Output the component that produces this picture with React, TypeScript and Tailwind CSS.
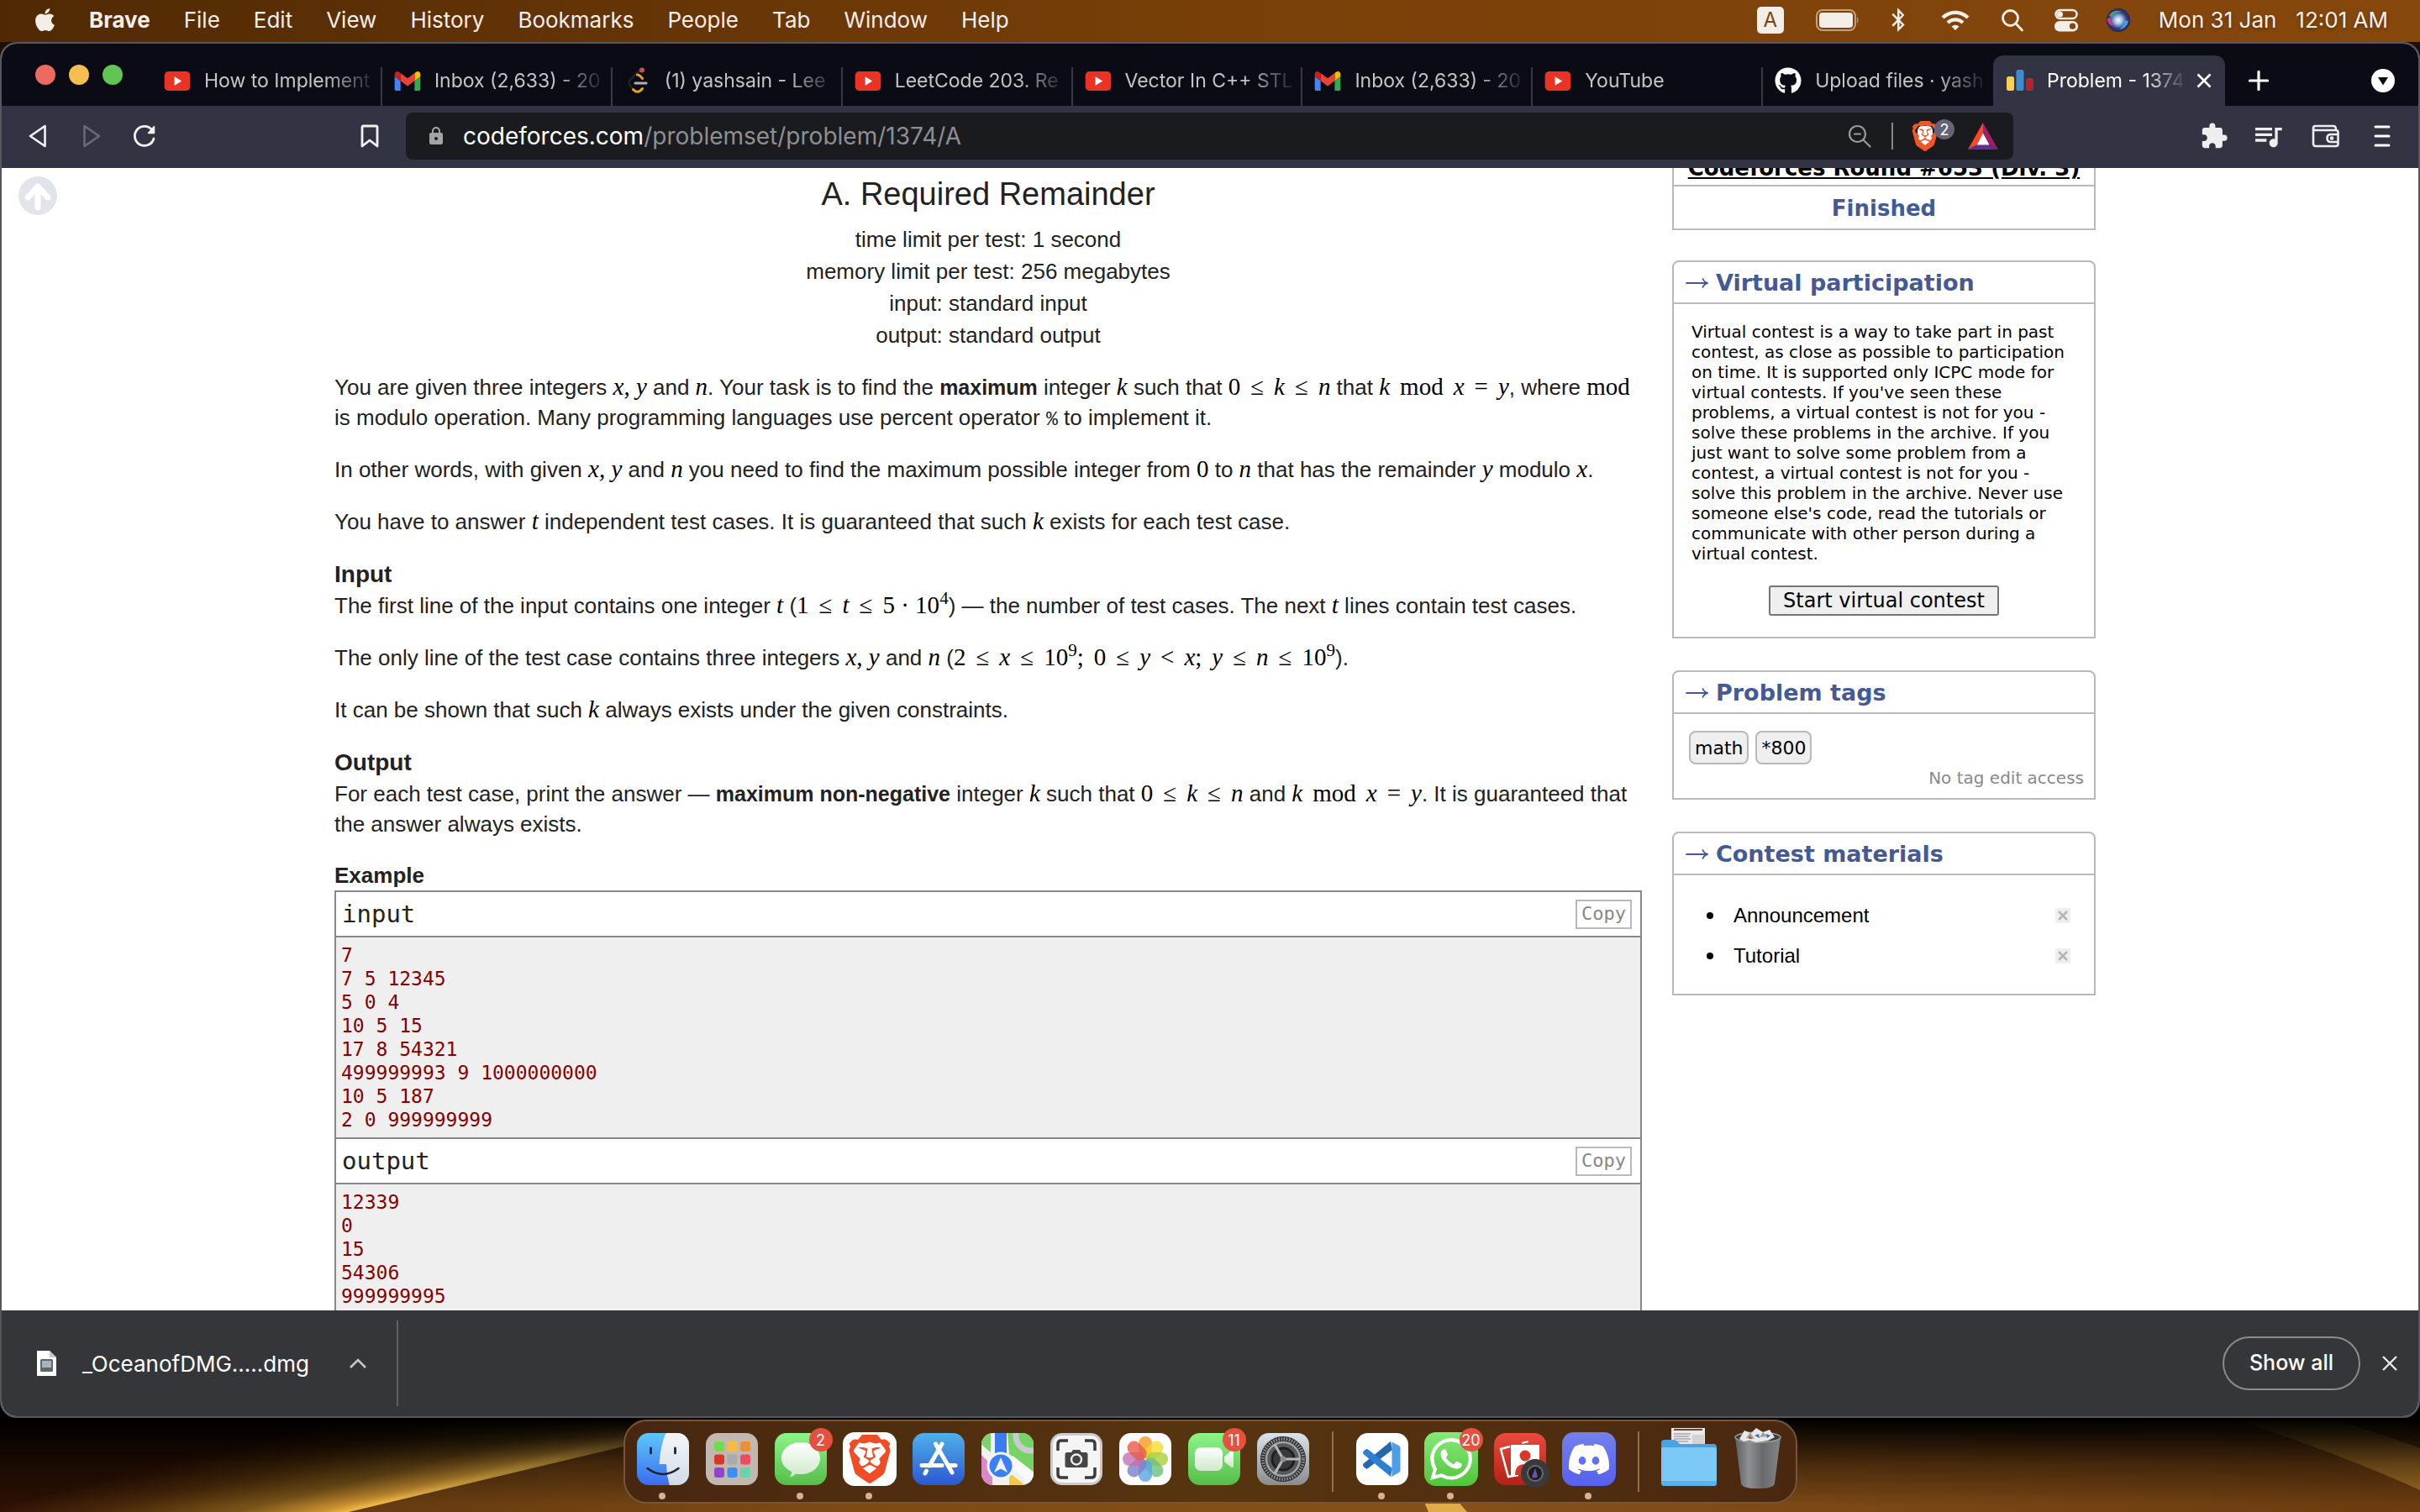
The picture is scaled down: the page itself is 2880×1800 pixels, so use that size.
import type { ReactNode } from 'react';
import { FaApple, FaGithub, FaBluetoothB } from 'react-icons/fa';
import { SiBrave, SiDiscord, SiWhatsapp } from 'react-icons/si';
import { MdWifi, MdLock, MdExtension, MdQueueMusic } from 'react-icons/md';

/* ---------- small icons ---------- */

function YoutubeIcon() {
  return (
    <svg viewBox="0 0 32 24" className="h-[23px] w-8">
      <rect width="32" height="24" rx="5" fill="#ea3323" />
      <path d="M12.500 6.500 21.500 12l-9 5.500z" fill="#fff" />
    </svg>
  );
}

function GmailIcon() {
  return (
    <svg viewBox="52 42 88 66" className="h-[23px] w-8">
      <path fill="#4285f4" d="M58 108h14V74L52 59v43c0 3.320 2.690 6 6 6" />
      <path fill="#34a853" d="M120 108h14c3.320 0 6-2.690 6-6V59l-20 15" />
      <path fill="#fbbc04" d="M120 48v26l20-15v-8c0-7.420-8.470-11.650-14.400-7.200" />
      <path fill="#ea4335" d="M72 74V48l24 18 24-18v26L96 92" />
      <path fill="#c5221f" d="M52 51v8l20 15V48l-5.600-4.200c-5.940-4.450-14.400-.22-14.400 7.200" />
    </svg>
  );
}

function LeetcodeIcon() {
  return (
    <svg viewBox="0 0 32 32" className="size-8" fill="none" strokeWidth="3" strokeLinecap="round">
      <path d="M20 2 7.500 14.500q-4 4 0 8l4 5.500" stroke="#26221f" strokeWidth="2.500" />
      <path d="M15.500 9q3 0 6 4.500" stroke="#e7a41f" />
      <path d="M10.500 26.500q5.500 6 11-1" stroke="#e7a41f" />
      <path d="M13 19h13" stroke="#b3b1b0" />
      <circle cx="21" cy="3.500" r="3" fill="#c9504a" />
    </svg>
  );
}

function CodeforcesIcon() {
  return (
    <svg viewBox="0 0 32 26" className="h-[26px] w-8 shrink-0">
      <rect x="0" y="8" width="9" height="17" rx="2.500" fill="#f6d155" />
      <rect x="11.500" y="0" width="9" height="25" rx="2.500" fill="#3b8dd0" />
      <rect x="23" y="10" width="9" height="15" rx="2.500" fill="#b3252c" />
    </svg>
  );
}

/* ---------- menu bar ---------- */

const menus = ['File', 'Edit', 'View', 'History', 'Bookmarks', 'People', 'Tab', 'Window', 'Help'];

function MenuBar() {
  return (
    <header className="flex h-[50px] shrink-0 items-center justify-between bg-linear-to-r from-[#502904] via-[#783f08] to-[#87480d] pr-[38px] pb-[3px] pl-[38px] text-[26px] text-[#f4eee8] [text-shadow:0_2px_4px_rgba(0,0,0,0.35)]">
      <nav className="flex items-center gap-[40px]">
        <button aria-label="Apple menu" className="-mr-[3px]"><FaApple className="size-[31px]" /></button>
        <button className="font-bold">Brave</button>
        {menus.map((m) => (
          <button key={m}>{m}</button>
        ))}
      </nav>
      <div className="flex items-center">
        <button className="flex size-8 items-center justify-center rounded-[5px] bg-[#f4eee8] text-[24px] text-[#7d410b] [text-shadow:none]">A</button>
        <svg viewBox="0 0 52 26" className="ml-[38px] h-[26px] w-[52px]">
          <rect x="1" y="1" width="46" height="24" rx="7" fill="none" stroke="#f4eee8" strokeOpacity="0.55" strokeWidth="2" />
          <rect x="4" y="4" width="40" height="18" rx="4" fill="#f4eee8" />
          <path d="M49 9q3 4 0 8z" fill="#f4eee8" fillOpacity="0.55" />
        </svg>
        <FaBluetoothB className="ml-[34px] h-[29px] w-6" />
        <MdWifi className="ml-[38px] size-9" />
        <svg viewBox="0 0 28 28" className="ml-[36px] size-7" fill="none" stroke="#f4eee8" strokeWidth="2.800" strokeLinecap="round">
          <circle cx="11.500" cy="11.500" r="9" />
          <path d="m18.500 18.500 7 7.500" />
        </svg>
        <svg viewBox="0 0 28 28" className="ml-[36px] size-7">
          <rect x="1.500" y="2" width="25" height="10" rx="5" fill="none" stroke="#f4eee8" strokeWidth="2.400" />
          <circle cx="6.500" cy="7" r="3.500" fill="#f4eee8" />
          <rect x="0" y="15" width="28" height="12.500" rx="6" fill="#f4eee8" />
          <circle cx="21.500" cy="21.200" r="3.600" fill="#83450c" />
        </svg>
        <svg viewBox="0 0 28 28" className="ml-[34px] size-7">
          <defs>
            <radialGradient id="siri">
              <stop offset="0" stopColor="#fff" />
              <stop offset="0.350" stopColor="#9db8ee" />
              <stop offset="0.700" stopColor="#35407e" />
              <stop offset="1" stopColor="#2a2350" />
            </radialGradient>
          </defs>
          <circle cx="14" cy="14" r="14" fill="url(#siri)" />
          <path d="M3 8q6-8 15-4-9 0-11 8z" fill="#3f9c84" />
          <path d="M1 12q0 8 8 9-5-4-4-10z" fill="#d63d8f" />
          <path d="M26 15q-2 9-11 10 6-4 7-11z" fill="#3fa4ea" />
        </svg>
        <time className="ml-[34px] flex gap-[23px]"><span>Mon 31 Jan</span><span>12:01 AM</span></time>
      </div>
    </header>
  );
}

/* ---------- tabs ---------- */

const tabs: { icon: ReactNode; title: string }[] = [
  { icon: <YoutubeIcon />, title: 'How to Implement' },
  { icon: <GmailIcon />, title: 'Inbox (2,633) - 20' },
  { icon: <LeetcodeIcon />, title: '(1) yashsain - Lee' },
  { icon: <YoutubeIcon />, title: 'LeetCode 203. Re' },
  { icon: <YoutubeIcon />, title: 'Vector In C++ STL' },
  { icon: <GmailIcon />, title: 'Inbox (2,633) - 20' },
  { icon: <YoutubeIcon />, title: 'YouTube' },
  { icon: <FaGithub className="size-8 text-white" />, title: 'Upload files · yash' },
];

function TabStrip() {
  return (
    <div className="flex h-[74px] shrink-0 items-end bg-[#0b0b15]">
      <div className="flex h-full w-[179px] shrink-0 items-center gap-4 pl-10">
        <button aria-label="Close window" className="size-6 rounded-full bg-[#ee6a5f]" />
        <button aria-label="Minimise window" className="size-6 rounded-full bg-[#f5bf4f]" />
        <button aria-label="Zoom window" className="size-6 rounded-full bg-[#61c554]" />
      </div>
      {tabs.map((t, i) => (
        <div key={i} className="relative flex h-[60px] max-w-[274px] min-w-0 flex-1 items-center">
          <button className="flex w-full min-w-0 items-center gap-4 pr-[5px] pl-[14px] text-[23px] text-[#c4c4c7]">
            <span className="shrink-0">{t.icon}</span>
            <span className="min-w-0 flex-1 overflow-hidden text-left whitespace-nowrap [mask-image:linear-gradient(to_right,black_70%,transparent)]">{t.title}</span>
          </button>
          {i < 7 && <span className="absolute right-0 bottom-0 h-[46px] w-[2px] bg-[#38383f]" />}
        </div>
      ))}
      <div className="flex h-[60px] max-w-[276px] min-w-0 flex-1 items-center rounded-t-[12px] bg-[#323443] pl-[16px] text-[23px] text-white">
        <CodeforcesIcon />
        <button className="ml-4 w-[166px] overflow-hidden text-left whitespace-nowrap [mask-image:linear-gradient(to_right,black_70%,transparent)]">Problem - 1374</button>
        <button aria-label="Close tab" className="ml-[12px]">
          <svg viewBox="0 0 18 18" className="size-[18px]" stroke="#fff" strokeWidth="2.600"><path d="m1.500 1.500 15 15m0-15-15 15" /></svg>
        </button>
      </div>
      <div className="ml-auto flex h-[60px] w-[230px] shrink-0 items-center justify-between pr-[28px] pl-[28px]">
        <button aria-label="New tab">
          <svg viewBox="0 0 24 24" className="size-6" stroke="#fff" strokeWidth="3.200" strokeLinecap="round"><path d="M12 1.500v21M1.500 12h21" /></svg>
        </button>
        <button aria-label="Search tabs">
          <svg viewBox="0 0 28 28" className="size-7"><circle cx="14" cy="14" r="14" fill="#fff" /><path d="M8 10h12l-6 9.500z" fill="#0b0b15" /></svg>
        </button>
      </div>
    </div>
  );
}

/* ---------- toolbar ---------- */

function Toolbar() {
  return (
    <div className="flex h-[74px] shrink-0 items-center bg-[#323443] pb-[2px] text-[#eeeeef]">
      <button aria-label="Back" className="ml-[32px]">
        <svg viewBox="0 0 22 28" className="h-7 w-[22px]" fill="none" stroke="#f2f2f3" strokeWidth="2.600" strokeLinejoin="round"><path d="M19.500 2v24L2 14z" /></svg>
      </button>
      <button aria-label="Forward" className="ml-[42px]">
        <svg viewBox="0 0 22 28" className="h-7 w-[22px]" fill="none" stroke="#6b6c76" strokeWidth="2.400" strokeLinejoin="round"><path d="M2.500 2v24L20 14z" /></svg>
      </button>
      <button aria-label="Reload" className="ml-[37px]">
        <svg viewBox="0 0 30 30" className="size-[30px]" fill="none" stroke="#f2f2f3" strokeWidth="2.800" strokeLinecap="round">
          <path d="M24.500 8.500A11.500 11.500 0 1 0 26 18" />
          <path d="M26.500 3.500v8h-7z" fill="#f2f2f3" strokeWidth="1.500" strokeLinejoin="round" />
        </svg>
      </button>
      <button aria-label="Bookmark" className="ml-[242px]">
        <svg viewBox="0 0 22 28" className="h-7 w-[22px]" fill="none" stroke="#f2f2f3" strokeWidth="2.800" strokeLinejoin="round"><path d="M2 3.500A1.500 1.500 0 0 1 3.500 2h15A1.500 1.500 0 0 1 20 3.500V26l-9-7-9 7z" /></svg>
      </button>
      <div className="ml-[32px] flex h-14 flex-1 items-center rounded-lg bg-[#1a1b1f] pr-[18px] pl-[24px] text-[28px]">
        <MdLock className="size-[24px] text-[#a3a4a8]" />
        <a href="#address" className="ml-[20px] text-[#8e8f92]"><span className="text-white">codeforces.com</span>/problemset/problem/1374/A</a>
        <button aria-label="Zoom out" className="ml-auto">
          <svg viewBox="0 0 28 28" className="size-7" fill="none" stroke="#9b9ca0" strokeWidth="2.200" strokeLinecap="round"><circle cx="11.500" cy="11.500" r="9.500" /><path d="m18.500 18.500 8 8M8 11.500h7" /></svg>
        </button>
        <span className="ml-[24px] h-8 w-[2px] bg-[#86878b]" />
        <button aria-label="Brave Shields" className="relative ml-[22px]">
          <span className="block rounded-[12px] bg-white bg-clip-content px-[7px] py-[6px]"><SiBrave className="-mx-[9px] -my-[6px] size-[36px] text-[#f1562b]" /></span>
          <span className="absolute -top-[2px] left-[27px] flex size-6 items-center justify-center rounded-full bg-[#636574] text-[18px] text-white">2</span>
        </button>
        <button aria-label="Brave Rewards" className="ml-[35px]">
          <svg viewBox="0 0 36 32" className="h-8 w-9">
            <path d="M18 0 0 32l10.500-5.500L18 12.500z" fill="#ff4724" />
            <path d="m18 0 18 32-10.500-5.500L18 12.500z" fill="#9e1f63" />
            <path d="M0 32h36l-10.500-5.500h-15z" fill="#662d91" />
            <path d="m18 12.500 7.500 14h-15z" fill="#fff" />
          </svg>
        </button>
      </div>
      <button aria-label="Extensions" className="ml-[222px]"><MdExtension className="size-[34px]" /></button>
      <button aria-label="Playlist" className="ml-[27px]"><MdQueueMusic className="size-[40px]" /></button>
      <button aria-label="Wallet" className="ml-[32px]">
        <svg viewBox="0 0 34 28" className="h-7 w-[34px]" fill="none" stroke="#eeeeef" strokeWidth="2.600" strokeLinejoin="round">
          <path d="M2 4.500A2.500 2.500 0 0 1 4.500 2H26q3 0 3 4.500M2 4.500Q2 7 4.500 7H29q2.500 0 2.500 2.500v14Q31.500 26 29 26H5q-3 0-3-3z" />
          <path d="M31.500 12H23q-4.500 0-4.500 4.500T23 21h8.500" /><circle cx="24" cy="16.500" r="1" />
        </svg>
      </button>
      <button aria-label="Menu" className="mr-[33px] ml-[40px]">
        <svg viewBox="0 0 20 26" className="h-[26px] w-5" stroke="#fff" strokeWidth="3" strokeLinecap="round"><path d="M2 2h16M2 13h16M2 24h16" /></svg>
      </button>
    </div>
  );
}

/* ---------- problem statement ---------- */

function M({ children }: { children: ReactNode }) {
  return <span className="font-['Liberation_Serif',serif] text-[29px] leading-none text-black">{children}</span>;
}

/* Terms of a relation, evenly spaced. */
function Rel({ terms }: { terms: ReactNode[] }) {
  return (
    <span className="inline-flex items-baseline gap-[12px] font-['Liberation_Serif',serif] text-[29px] leading-none text-black">
      {terms.map((t, i) => (
        <span key={i}>{t}</span>
      ))}
    </span>
  );
}

function Sup({ children }: { children: ReactNode }) {
  return <sup className="top-[-11px] align-baseline text-[21px] leading-none">{children}</sup>;
}

const k = <i>k</i>;
const n = <i>n</i>;
const t = <i>t</i>;
const x = <i>x</i>;
const y = <i>y</i>;

const sampleInput = ['7', '7 5 12345', '5 0 4', '10 5 15', '17 8 54321', '499999993 9 1000000000', '10 5 187', '2 0 999999999'];
const sampleOutput = ['12339', '0', '15', '54306', '999999995'];

function Sample({ title, lines }: { title: string; lines: string[] }) {
  return (
    <section className="border-b-2 border-[#888]">
      <div className="flex h-[54px] items-center justify-between border-b-2 border-[#888] pr-[10px] pl-[7px]">
        <h4 className="font-['DejaVu_Sans_Mono',monospace] text-[29px]">{title}</h4>
        <button className="flex h-[35px] items-center border-2 border-[#b9b9b9] px-[5px] font-['DejaVu_Sans_Mono',monospace] text-[22px] text-[#888]">Copy</button>
      </div>
      <pre className="bg-[#efefef] px-[6px] py-[7px] font-['DejaVu_Sans_Mono',monospace] text-[23px] leading-[28px] text-[#880000]">{lines.join('\n')}</pre>
    </section>
  );
}

function Statement() {
  return (
    <main className="min-w-0 flex-1 pt-[9px] font-['Liberation_Sans',Arial,sans-serif] text-[26px] leading-9 text-[#222]">
      <div className="text-center leading-[38px]">
        <h1 className="mb-[13px] text-[38px] leading-[44px]">A. Required Remainder</h1>
        <p>time limit per test: 1 second</p>
        <p>memory limit per test: 256 megabytes</p>
        <p>input: standard input</p>
        <p>output: standard output</p>
      </div>
      <div className="mt-[25px] flex flex-col gap-[26px]">
        <p>
          You are given three integers <M>{x}, {y}</M> and <M>{n}</M>. Your task is to find the <b className="text-[25px]">maximum</b> integer <M>{k}</M> such that{' '}
          <Rel terms={['0', '≤', k, '≤', n]} /> that <Rel terms={[k, 'mod', x, '=', y]} />, where <M>mod</M> is modulo operation. Many programming languages use percent operator{' '}
          <code className="font-['Liberation_Mono',monospace] text-[23px] leading-none">%</code> to implement it.
        </p>
        <p>
          In other words, with given <M>{x}, {y}</M> and <M>{n}</M> you need to find the maximum possible integer from <M>0</M> to <M>{n}</M> that has the remainder <M>{y}</M> modulo <M>{x}</M>.
        </p>
        <p>
          You have to answer <M>{t}</M> independent test cases. It is guaranteed that such <M>{k}</M> exists for each test case.
        </p>
      </div>
      <h2 className="mt-[25px] text-[28px] leading-[39px] font-bold">Input</h2>
      <div className="flex flex-col gap-[26px]">
        <p>
          The first line of the input contains one integer <M>{t}</M> (<Rel terms={['1', '≤', t, '≤', <>5 · 10<Sup>4</Sup></>]} />) — the number of test cases. The next <M>{t}</M> lines contain test cases.
        </p>
        <p>
          The only line of the test case contains three integers <M>{x}, {y}</M> and <M>{n}</M> (<Rel terms={['2', '≤', x, '≤', <>10<Sup>9</Sup>;</>, '0', '≤', y, '<', <>{x};</>, y, '≤', n, '≤', <>10<Sup>9</Sup></>]} />).
        </p>
        <p>
          It can be shown that such <M>{k}</M> always exists under the given constraints.
        </p>
      </div>
      <h2 className="mt-[25px] text-[28px] leading-[39px] font-bold">Output</h2>
      <p>
        For each test case, print the answer — <b className="text-[25px]">maximum non-negative</b> integer <M>{k}</M> such that <Rel terms={['0', '≤', k, '≤', n]} /> and <Rel terms={[k, 'mod', x, '=', y]} />. It is guaranteed that the answer always exists.
      </p>
      <h3 className="mt-[25px] text-[26px] font-bold">Example</h3>
      <div className="border-x-2 border-t-2 border-[#888] leading-none">
        <Sample title="input" lines={sampleInput} />
        <Sample title="output" lines={sampleOutput} />
      </div>
    </main>
  );
}

/* ---------- sidebar ---------- */

function Box({ title, children }: { title: string; children: ReactNode }) {
  return (
    <section className="rounded-t-[8px] border-2 border-[#b9b9b9]">
      <h2 className="flex h-[50px] items-center gap-[8px] border-b-2 border-[#b9b9b9] pt-[2px] pl-[14px] text-[27px] font-bold text-[#445a94]">
        <svg viewBox="0 0 28 16" className="h-4 w-7" fill="none" stroke="#445a94" strokeWidth="1.800" strokeLinecap="round"><path d="M1 8h25M20.500 3q1.500 4 6 5-4.500 1-6 5" /></svg>
        {title}
      </h2>
      {children}
    </section>
  );
}

function Sidebar() {
  return (
    <aside className="-mt-[40px] flex w-[504px] shrink-0 flex-col gap-[38px] font-['DejaVu_Sans',Verdana,sans-serif] text-black">
      <table className="-mb-[2px] w-full border-collapse text-[26px] leading-8">
        <tbody>
          <tr><th className="h-[60px] border-2 border-[#b9b9b9] pt-[18px] whitespace-nowrap"><a href="#contest" className="underline">Codeforces Round #653 (Div. 3)</a></th></tr>
          <tr><td className="h-[52px] border-2 border-[#b9b9b9] pt-[2px] text-center font-bold text-[#445a94]">Finished</td></tr>
        </tbody>
      </table>
      <Box title="Virtual participation">
        <div className="flex flex-col items-center px-[21px] pt-[21px] pb-[25px]">
          <p className="text-[20px] leading-6">
            Virtual contest is a way to take part in past contest, as close as possible to participation on time. It is supported only ICPC mode for virtual contests. If you've seen these problems, a virtual contest is not for you - solve these problems in the archive. If you just want to solve some problem from a contest, a virtual contest is not for you - solve this problem in the archive. Never use someone else's code, read the tutorials or communicate with other person during a virtual contest.
          </p>
          <button className="mt-[26px] flex h-9 items-center rounded-[3px] border-2 border-[#767676] bg-[#efefef] px-[15px] text-[24px]">Start virtual contest</button>
        </div>
      </Box>
      <Box title="Problem tags">
        <div className="px-[18px] pt-5">
          <div className="flex gap-2 text-[22px]">
            <a href="#math" className="flex h-10 items-center rounded-[8px] border-2 border-[#b9b9b9] bg-[#efefef] px-[5px]">math</a>
            <a href="#800" className="flex h-10 items-center rounded-[8px] border-2 border-[#b9b9b9] bg-[#efefef] px-[5px]">*800</a>
          </div>
        </div>
        <p className="h-10 pr-3 text-right text-[20px] leading-[32px] text-[#888]">No tag edit access</p>
      </Box>
      <Box title="Contest materials">
        <ul className="flex flex-col gap-[12px] pt-[30px] pb-[27px] pl-[39px] font-['Liberation_Sans',Arial,sans-serif] text-[24px] leading-9">
          {['Announcement', 'Tutorial'].map((item) => (
            <li key={item} className="flex items-center">
              <span className="size-2 rounded-full bg-black" />
              <a href={'#' + item} className="ml-[24px]">{item}</a>
              <button aria-label={'Remove ' + item} className="mr-[28px] ml-auto flex size-[18px] items-center justify-center bg-[#efefef]">
                <svg viewBox="0 0 12 12" className="size-3" stroke="#b5b5b5" strokeWidth="2.600"><path d="m1 1 10 10M11 1 1 11" /></svg>
              </button>
            </li>
          ))}
        </ul>
      </Box>
    </aside>
  );
}

/* ---------- download shelf ---------- */

function Downloads() {
  return (
    <div className="relative z-10 flex h-[126px] shrink-0 items-center bg-[#35363a] text-[26px] text-white">
      <svg viewBox="0 0 24 30" className="ml-[42px] h-[30px] w-6">
        <path d="M0 0h15l8 8v22H0z" fill="#fff" />
        <path d="M15 0v8h8z" fill="#c9c9c9" />
        <rect x="4" y="10" width="15" height="15" rx="1.500" fill="#5f676e" />
        <rect x="6" y="12" width="11" height="8" fill="#a9b3ba" />
      </svg>
      <button className="ml-[30px]">_OceanofDMG.....dmg</button>
      <button aria-label="Download options" className="ml-[48px]">
        <svg viewBox="0 0 20 12" className="h-3 w-5" fill="none" stroke="#c8c8ca" strokeWidth="2.600"><path d="m1 11 9-9 9 9" /></svg>
      </button>
      <span className="ml-[36px] h-[102px] w-[2px] bg-[#606165]" />
      <button className="ml-auto flex h-[64px] items-center rounded-full border-2 border-[#8b8c90] px-[30px] text-[25px] font-medium">Show all</button>
      <button aria-label="Close downloads" className="mr-[25px] ml-[26px]">
        <svg viewBox="0 0 18 18" className="size-[18px]" stroke="#e8e8e9" strokeWidth="2.400"><path d="m1 1 16 16m0-16L1 17" /></svg>
      </button>
    </div>
  );
}

/* ---------- dock ---------- */

function Finder() {
  return (
    <svg viewBox="0 0 64 64" className="size-16">
      <defs>
        <linearGradient id="fd" x2="0" y2="1"><stop stopColor="#5ec9fa" /><stop offset="1" stopColor="#3b6bf0" /></linearGradient>
        <linearGradient id="fl" x2="0" y2="1"><stop stopColor="#f5f5f7" /><stop offset="1" stopColor="#d3dbe8" /></linearGradient>
        <clipPath id="fc"><rect x="1" y="1" width="62" height="62" rx="14" /></clipPath>
      </defs>
      <g clipPath="url(#fc)">
        <rect width="64" height="64" fill="url(#fd)" />
        <path d="M36 0q-7 14-8.500 38H36q0 13 4 26h24V0z" fill="url(#fl)" />
      </g>
      <path d="M17.500 19v6M46.500 19v6" stroke="#1d2433" strokeWidth="2.800" strokeLinecap="round" />
      <path d="M13.500 43q18.500 14 37 0" fill="none" stroke="#1d2433" strokeWidth="2.600" strokeLinecap="round" />
    </svg>
  );
}

function Launchpad() {
  const c = ['#6fdc4b', '#f6bd3c', '#ee8f36', '#d8362b', '#a6abae', '#ee4a60', '#8f44c9', '#3b8ff0', '#6bd2ac'];
  return (
    <svg viewBox="0 0 64 64" className="size-16">
      <rect x="1" y="1" width="62" height="62" rx="14" fill="#c2b8b0" />
      {c.map((f, i) => (
        <rect key={i} x={11 + (i % 3) * 15.500} y={11 + Math.floor(i / 3) * 15.500} width="12" height="12" rx="3" fill={f} />
      ))}
    </svg>
  );
}

function Messages() {
  return (
    <svg viewBox="0 0 64 64" className="size-16">
      <defs>
        <linearGradient id="gr" x2="0" y2="1"><stop stopColor="#8bf588" /><stop offset="1" stopColor="#57bd4a" /></linearGradient>
        <linearGradient id="wh" x2="0" y2="1"><stop stopColor="#fff" /><stop offset="1" stopColor="#cfe8ca" /></linearGradient>
      </defs>
      <rect x="1" y="1" width="62" height="62" rx="14" fill="url(#gr)" />
      <path d="M32 12c13 0 23 8 23 19s-10 19-23 19q-4 0-6-.6-3 3.600-7.500 3.600 3-2.500 2.500-6C13.500 43 9 38 9 31c0-11 10-19 23-19" fill="url(#wh)" />
    </svg>
  );
}

function BraveDock() {
  return (
    <span className="flex size-16 items-center justify-center rounded-[14px] bg-white"><SiBrave className="size-[58px] text-[#f14c25]" /></span>
  );
}

function AppStore() {
  return (
    <svg viewBox="0 0 64 64" className="size-16">
      <defs><linearGradient id="as" x2="0" y2="1"><stop stopColor="#4fb0ea" /><stop offset="1" stopColor="#2c58d0" /></linearGradient></defs>
      <rect x="1" y="1" width="62" height="62" rx="14" fill="url(#as)" />
      <path d="M36 14 21 40M28.500 14 48 48M12 39.500h24M44.500 39.500H52M17.500 46l-1.500 3" stroke="#fff" strokeWidth="5" strokeLinecap="round" />
    </svg>
  );
}

function Maps() {
  return (
    <svg viewBox="0 0 64 64" className="size-16">
      <defs><clipPath id="mp"><rect x="1" y="1" width="62" height="62" rx="14" /></clipPath></defs>
      <g clipPath="url(#mp)">
        <rect width="64" height="64" fill="#f1f1f0" />
        <path d="M0 0h12v24L0 14z" fill="#7ed36c" />
        <path d="M32 0h32v50L34 26z" fill="#76d368" />
        <path d="M0 26 14 40v24H0z" fill="#d98ac6" />
        <path d="M34 64V48l20 16z" fill="#f6c944" />
        <path d="M30 36 64 66V48L38 28z" fill="#fafafa" />
        <circle cx="60" cy="4" r="18" fill="none" stroke="#c9cbd0" strokeWidth="7" />
        <path d="M17 0h14v30H17z" fill="#3a7cf0" />
      </g>
      <circle cx="24" cy="40" r="15" fill="#3a7ff5" stroke="#f4f4f6" strokeWidth="3" />
      <path d="m24 30 8 18-8-4.500L16 48z" fill="#f2f2f4" />
    </svg>
  );
}

function Screenshot() {
  return (
    <svg viewBox="0 0 64 64" className="size-16">
      <rect x="1" y="1" width="62" height="62" rx="14" fill="#cbcbcb" />
      <rect x="4" y="4" width="56" height="56" rx="11" fill="#f5f5f5" />
      <path d="M10 22v-8q0-4 4-4h8M42 10h8q4 0 4 4v8M54 42v8q0 4-4 4h-8M22 54h-8q-4 0-4-4v-8" fill="none" stroke="#3b3b3b" strokeWidth="3.500" />
      <path d="M21 24h5l2-3h8l2 3h5q2.500 0 2.500 2.500v13Q45.500 42 43 42H21q-2.500 0-2.500-2.500v-13Q18.500 24 21 24" fill="#454545" />
      <circle cx="32" cy="32.500" r="6" fill="none" stroke="#f0f0f0" strokeWidth="2.400" />
    </svg>
  );
}

function Photos() {
  const c = ['#f59a23', '#f2dc32', '#a9cf3f', '#6cbf7c', '#5aa5e0', '#7c7fcc', '#c06fb3', '#ea5a4c'];
  return (
    <svg viewBox="0 0 64 64" className="size-16">
      <rect x="1" y="1" width="62" height="62" rx="14" fill="#fdfdfd" />
      {c.map((f, i) => (
        <rect key={i} x="24" y="5" width="16" height="26" rx="8" fill={f} fillOpacity="0.800" transform={`rotate(${i * 45} 32 32)`} />
      ))}
    </svg>
  );
}

function FaceTime() {
  return (
    <svg viewBox="0 0 64 64" className="size-16">
      <rect x="1" y="1" width="62" height="62" rx="14" fill="url(#gr)" />
      <rect x="9" y="18" width="33" height="28" rx="7" fill="url(#wh)" />
      <path d="m44 29 8-6.500q3-1.500 3 1.500v16q0 3-3 1.500L44 35z" fill="url(#wh)" />
    </svg>
  );
}

function Settings() {
  return (
    <svg viewBox="0 0 64 64" className="size-16">
      <defs><linearGradient id="st" x2="0" y2="1"><stop stopColor="#dbe4ec" /><stop offset="1" stopColor="#8b8b8b" /></linearGradient></defs>
      <rect x="1" y="1" width="62" height="62" rx="14" fill="url(#st)" />
      <circle cx="32" cy="32" r="27" fill="#2c2c2e" />
      <circle cx="32" cy="32" r="24" fill="none" stroke="#8f9194" strokeWidth="4" strokeDasharray="1.600 1.540" />
      <circle cx="32" cy="32" r="20" fill="#58595c" stroke="#a2a4a6" strokeWidth="2.500" />
      <circle cx="32" cy="32" r="13" fill="#3a3a3c" stroke="#1f1f20" strokeWidth="3" />
      <path d="M32 32h20M32 32 22 14.700M32 32 22 49.300" stroke="#b4b6b8" strokeWidth="3.200" />
      <circle cx="32" cy="32" r="3.500" fill="#8b8d90" />
    </svg>
  );
}

function VSCode() {
  return (
    <svg viewBox="0 0 64 64" className="size-16">
      <rect x="1" y="1" width="62" height="62" rx="14" fill="#fff" />
      <path d="M42 11 9.500 37.500q-1 1.500 0 3l2.500 2.500q1.500 1 3 0L44 21z" fill="#2467ad" />
      <path d="m42 53-32.500-27q-1-1.500 0-3l2.500-2.500q1.500-1 3 0L44 43z" fill="#2f7fd0" />
      <path d="m42 11 10 5q1.500 1 1.500 2.500v27q0 1.500-1.500 2.500l-10 5.500q1.500-1 1.500-3.500V14q0-2.500-1.500-3" fill="#4b9fe8" />
    </svg>
  );
}

function WhatsApp() {
  return (
    <span className="flex size-16 items-center justify-center rounded-[14px] bg-linear-to-b from-[#83ea77] to-[#52c53a]"><SiWhatsapp className="size-[50px] text-white" /></span>
  );
}

function PhotoBooth() {
  return (
    <svg viewBox="0 0 70 68" className="h-[68px] w-[70px]">
      <defs><linearGradient id="pb" x2="0" y2="1"><stop stopColor="#ea4a3b" /><stop offset="1" stopColor="#b32118" /></linearGradient></defs>
      <rect x="1" y="1" width="62" height="62" rx="14" fill="url(#pb)" />
      <path d="m20 17-11 3 9 33 12-2" fill="none" stroke="#fff" strokeWidth="2.500" />
      <path d="m34 13 8-2" stroke="#fff" strokeWidth="2" />
      <rect x="21" y="15" width="34" height="36" fill="#fff" />
      <circle cx="38" cy="28" r="6.500" fill="#d8382c" />
      <path d="M26 51q0-13 12-13t12 13z" fill="#d8382c" />
      <circle cx="50" cy="49" r="17" fill="#3a3a3c" />
      <circle cx="50" cy="49" r="9" fill="#1d1d20" stroke="#6b6b6e" strokeWidth="2" />
      <path d="m50 43-4 10q3 3 7 0z" fill="#6a4fb0" />
    </svg>
  );
}

function Discord() {
  return (
    <span className="flex size-16 items-center justify-center rounded-[14px] bg-linear-to-b from-[#7480ec] to-[#5561ee]"><SiDiscord className="size-[48px] text-white" /></span>
  );
}

function Folder() {
  return (
    <svg viewBox="0 0 66 72" className="h-[72px] w-[66px]">
      <path d="M12 2h40v24H12z" fill="#eaeaea" />
      <path d="M15 4h34" stroke="#7b4038" strokeWidth="2" />
      <path d="M15 9h20M15 12h18M15 15h20M15 18h17" stroke="#a9a9a9" strokeWidth="1.500" />
      <path d="M37 10h14v14H37z" fill="#d3d3d3" />
      <path d="M0 20q0-4 4-4h11q3 0 5 3l2 2h40q4 0 4 4v10H0z" fill="#4aa3df" />
      <path d="M0 28q0-3 3-3h60q3 0 3 3v39q0 4-4 4H4q-4 0-4-4z" fill="#7cc9f8" />
      <path d="M0 65h66v2q0 4-4 4H4q-4 0-4-4z" fill="#5db0e6" />
    </svg>
  );
}

function Trash() {
  return (
    <svg viewBox="0 0 56 74" className="h-[74px] w-14">
      <defs><linearGradient id="tr"><stop stopColor="#5d6062" /><stop offset="0.300" stopColor="#8e9193" /><stop offset="0.600" stopColor="#67696b" /><stop offset="1" stopColor="#84878a" /></linearGradient></defs>
      <path d="m1 12 7 55q1 6 20 6t20-6l7-55z" fill="url(#tr)" />
      <ellipse cx="28" cy="12" rx="27" ry="6" fill="#3c3e3f" stroke="#9a9c9e" strokeWidth="1.500" />
      <path d="m6 14 6-10 8 3 6-6 8 5 8-3 6 9-8 4-6 1-8 1-8-2-7 1z" fill="#e8e8e8" />
      <path d="m14 13 5-7 5 8zM30 12l4-6 6 5z" fill="#9fa3a6" />
      <path d="m24 10 5-2 1 5zM38 8l5 2-4 3z" fill="#3e6fa8" />
      <path d="m18 10 4 4h-5z" fill="#a55a35" />
    </svg>
  );
}

type DockItem = { label: string; icon: ReactNode; badge?: string; open?: boolean };

const dockApps: DockItem[] = [
  { label: 'Finder', icon: <Finder />, open: true },
  { label: 'Launchpad', icon: <Launchpad /> },
  { label: 'Messages', icon: <Messages />, badge: '2', open: true },
  { label: 'Brave', icon: <BraveDock />, open: true },
  { label: 'App Store', icon: <AppStore /> },
  { label: 'Maps', icon: <Maps /> },
  { label: 'Screenshot', icon: <Screenshot /> },
  { label: 'Photos', icon: <Photos /> },
  { label: 'FaceTime', icon: <FaceTime />, badge: '11' },
  { label: 'System Preferences', icon: <Settings /> },
];

const dockRecent: DockItem[] = [
  { label: 'Visual Studio Code', icon: <VSCode />, open: true },
  { label: 'WhatsApp', icon: <WhatsApp />, badge: '20', open: true },
  { label: 'Photo Booth', icon: <PhotoBooth /> },
  { label: 'Discord', icon: <Discord />, open: true },
];

function DockButton({ item }: { item: DockItem }) {
  return (
    <button aria-label={item.label} className="relative flex h-[98px] w-16 items-start pt-[13px]">
      <span className="shrink-0">{item.icon}</span>
      {item.badge && (
        <span className="absolute top-[8px] left-[42px] flex size-7 items-center justify-center rounded-full bg-[#e5503f] text-[18px] text-white">{item.badge}</span>
      )}
      {item.open && <span className="absolute bottom-[5px] left-[27px] size-2 rounded-full bg-[#d9b091]" />}
    </button>
  );
}

function Wallpaper() {
  return (
    <svg viewBox="0 0 2880 160" preserveAspectRatio="none" className="absolute inset-x-0 bottom-0 h-40 w-full">
      <defs>
        <linearGradient id="wg" gradientUnits="userSpaceOnUse" x1="580" y1="117" x2="552" y2="9">
          <stop stopColor="#f2bb47" />
          <stop offset="0.080" stopColor="#c98f30" />
          <stop offset="0.300" stopColor="#7a5418" />
          <stop offset="0.650" stopColor="#4a2a0a" />
          <stop offset="1" stopColor="#2c1004" />
        </linearGradient>
        <linearGradient id="wb"><stop stopColor="#54300f" /><stop offset="0.350" stopColor="#7d4a14" /><stop offset="0.600" stopColor="#86501a" /><stop offset="1" stopColor="#6b3c10" /></linearGradient>
        <linearGradient id="ws" x2="0" y2="1"><stop offset="0.300" stopColor="#000" /><stop offset="0.450" stopColor="#000" stopOpacity="0.780" /><stop offset="0.650" stopColor="#000" stopOpacity="0.400" /><stop offset="0.950" stopColor="#000" stopOpacity="0" /></linearGradient>
      </defs>
      <rect width="2880" height="160" fill="url(#wb)" />
      <path d="M0 0h960v30Q700 92 415 160H0z" fill="url(#wg)" />
      <path d="M1694 146h40l12 14h-46z" fill="#e0ac4a" />
      <path d="M2600 30q160 50 280 104V84q-120-44-220-60z" fill="#c98f35" fillOpacity="0.600" />
      <rect width="2880" height="160" fill="url(#ws)" />
    </svg>
  );
}

function Dock() {
  return (
    <footer className="relative flex h-[112px] shrink-0 justify-center pt-[2px]">
      <Wallpaper />
      <div className="relative flex h-[100px] items-start gap-[18px] rounded-[28px] border-2 border-[#77543a] bg-linear-to-r from-[#482710] via-[#57350f] to-[#4a2810] px-[13px]">
        {dockApps.map((a) => (
          <DockButton key={a.label} item={a} />
        ))}
        <span className="mx-[8px] mt-[12px] h-[72px] w-[2px] bg-[#92704e]" />
        {dockRecent.map((a) => (
          <DockButton key={a.label} item={a} />
        ))}
        <span className="mx-[8px] mt-[12px] h-[72px] w-[2px] bg-[#92704e]" />
        <button aria-label="Downloads" className="mt-[6px]"><Folder /></button>
        <button aria-label="Bin" className="mt-[7px] mr-[4px] ml-[3px]"><Trash /></button>
      </div>
    </footer>
  );
}

export default function App() {
  return (
    <div className="flex h-screen flex-col overflow-hidden bg-[#1c0f05] font-['Inter',sans-serif]">
      <MenuBar />
      <div className="relative z-10 flex min-h-0 flex-1 flex-col overflow-hidden rounded-[20px] border-2 border-[#56565c] bg-white">
        <TabStrip />
        <Toolbar />
        <div className="relative min-h-0 flex-1 overflow-hidden bg-white">
          <button aria-label="Scroll to top" className="absolute top-[10px] left-5">
            <svg viewBox="0 0 46 46" className="size-[46px]"><circle cx="23" cy="23" r="23" fill="#e1e5eb" /><path d="M23 37V13M11 25l12-13 12 13" fill="none" stroke="#fff" strokeWidth="7" strokeLinecap="round" strokeLinejoin="round" /></svg>
          </button>
          <div className="pl-3">
            <div className="mx-auto flex max-w-[2096px] items-start gap-9">
              <Statement />
              <Sidebar />
            </div>
          </div>
        </div>
        <Downloads />
      </div>
      <Dock />
    </div>
  );
}
